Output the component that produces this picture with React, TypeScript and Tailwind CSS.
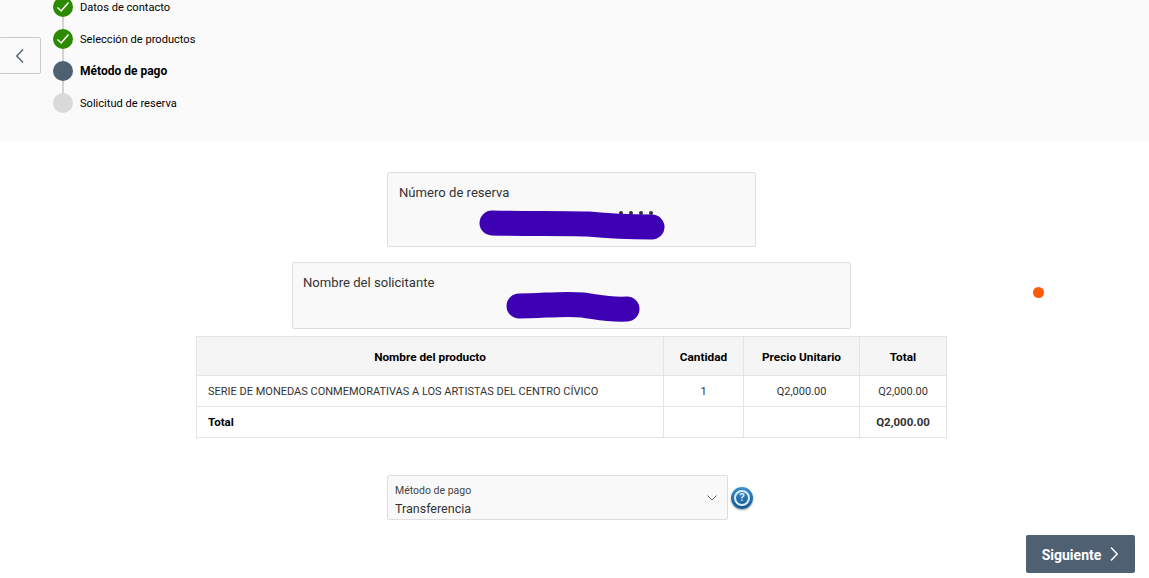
const steps = [
  { label: 'Datos de contacto', state: 'done' },
  { label: 'Selección de productos', state: 'done' },
  { label: 'Método de pago', state: 'current' },
  { label: 'Solicitud de reserva', state: 'pending' },
];

function StepDot({ state }: { state: string }) {
  if (state === 'done') {
    return (
      <span className="flex h-5 w-5 items-center justify-center rounded-full bg-[#2b8a00]">
        <svg width="14" height="12" viewBox="0 0 14 12" fill="none" stroke="white" strokeWidth="1.5">
          <path d="M1.5 6.5 L5.2 10 L12.5 1.5" />
        </svg>
      </span>
    );
  }
  return <span className={`h-5 w-5 rounded-full ${state === 'current' ? 'bg-[#4f6072]' : 'bg-[#d9d9d9]'}`} />;
}

function Stepper() {
  return (
    <ul className="relative ml-3 -mt-[3px] flex flex-col gap-3">
      <span className="absolute left-[9px] top-4 h-[88px] w-[2px] bg-[#d4d4d4]" />
      {steps.map((s) => (
        <li key={s.label} className="relative flex h-5 items-center gap-[7px]">
          <StepDot state={s.state} />
          <span className={`text-black ${s.state === 'current' ? 'text-[12px] font-bold' : 'pt-[2px] text-[11.1px]'}`}>{s.label}</span>
        </li>
      ))}
    </ul>
  );
}

function InfoBox({ label, width, height, left, children }: { label: string; width: string; height: string; left: string; children: React.ReactNode }) {
  return (
    <div className={`relative rounded-[2px] border border-[#dedede] bg-[#f9f9f9] pt-[11px] text-[13.1px] leading-[18px] text-[#333] ${width} ${height} ${left}`}>
      {label}
      {children}
    </div>
  );
}

const head = 'border border-[#e4e4e4] px-3 pt-1 text-[11.8px] font-bold';
const cell = 'border border-[#e4e4e4] px-[11px] pt-[2px] text-[11px]';
const bold = 'border border-[#e4e4e4] px-[11px] pt-[2px] text-[11.5px] font-bold';

export default function App() {
  return (
    <div className="relative h-[578px] w-[1149px] overflow-hidden bg-white font-['Roboto','Noto_Sans',sans-serif]">
      <div className="flex h-[142px] items-start bg-[#fafafa]">
        <button className="mt-[37px] -ml-px flex h-[37px] w-[42px] items-center justify-center rounded-[2px] border border-[#c5ccd3]">
          <svg width="10" height="16" viewBox="0 0 10 16" fill="none" stroke="#56697c" strokeWidth="1.5">
            <path d="M8 1.5 L1.8 8 L8 14.5" />
          </svg>
        </button>
        <div>
          <Stepper />
        </div>
      </div>

      <div className="ml-[196px] w-[751px] pt-[30px]">
        <InfoBox label="" width="w-[369px]" height="h-[75px]" left="ml-[191px]">
          <span className="ml-[11px]">Número de reserva</span>
          <svg className="absolute left-[80px] top-[30px]" width="200" height="40" viewBox="0 0 200 40" fill="none">
            <circle cx="153" cy="10" r="2" fill="#333" />
            <circle cx="163" cy="10" r="2" fill="#333" />
            <circle cx="173" cy="10" r="2" fill="#333" />
            <circle cx="183" cy="10" r="2" fill="#333" />
            <path d="M24 20 C60 21 90 20 120 21 C140 23 160 24 184 24" stroke="#3d00b3" strokeWidth="25" strokeLinecap="round" />
          </svg>
        </InfoBox>
        <div className="mt-[15px]">
          <InfoBox label="" width="w-[559px]" height="h-[67px]" left="ml-[96px]">
            <span className="ml-[10px]">Nombre del solicitante</span>
            <svg className="absolute left-[200px] top-[25px]" width="160" height="40" viewBox="0 0 160 40" fill="none">
              <path d="M26 18 C50 18 70 15 90 17 C105 19 115 22 134 21" stroke="#3d00b3" strokeWidth="25" strokeLinecap="round" />
            </svg>
          </InfoBox>
        </div>

        <table className="mt-[7px] w-[750px] table-fixed border-collapse text-[#333]">
          <colgroup>
            <col className="w-[467px]" />
            <col className="w-[80px]" />
            <col className="w-[116px]" />
            <col className="w-[87px]" />
          </colgroup>
          <thead>
            <tr className="h-[39px] bg-[#f5f5f5] text-black">
              <th className={head}>Nombre del producto</th>
              <th className={head}>Cantidad</th>
              <th className={head}>Precio Unitario</th>
              <th className={head}>Total</th>
            </tr>
          </thead>
          <tbody>
            <tr className="h-[31px]">
              <td className={`${cell} whitespace-nowrap`}>SERIE DE MONEDAS CONMEMORATIVAS A LOS ARTISTAS DEL CENTRO CÍVICO</td>
              <td className={`${cell} text-center`}>1</td>
              <td className={`${cell} text-center`}>Q2,000.00</td>
              <td className={`${cell} text-center`}>Q2,000.00</td>
            </tr>
            <tr className="h-[31px]">
              <td className={`${bold} text-black`}>Total</td>
              <td className={bold}></td>
              <td className={bold}></td>
              <td className={`${bold} text-center`}>Q2,000.00</td>
            </tr>
          </tbody>
        </table>

        <div className="ml-[191px] mt-[37px] flex items-center gap-[3px]">
          <div className="relative h-[45px] w-[341px] rounded-[2px] border border-[#dedede] bg-[#f9f9f9] px-[7px] pt-[8px]">
            <div className="text-[10.5px] leading-[14px] text-[#444]">Método de pago</div>
            <div className="pt-[1px] text-[12.5px] leading-[19px] text-[#333]">Transferencia</div>
            <svg className="absolute right-[9px] top-[18px]" width="12" height="8" viewBox="0 0 12 8" fill="none" stroke="#666" strokeWidth="1">
              <path d="M1.5 1.5 L6 6 L10.5 1.5" />
            </svg>
          </div>
          <span className="flex h-[22px] w-[22px] items-center justify-center rounded-full bg-gradient-to-b from-[#3a8fd0] to-[#14588f] shadow-[0_1px_2px_rgba(0,0,0,0.4)]">
            <span className="flex h-[16px] w-[16px] items-center justify-center rounded-full border-2 border-[#d8ecfa] text-[11px] font-bold leading-none text-[#d8ecfa]">?</span>
          </span>
        </div>
      </div>

      <button className="absolute left-[1026px] top-[535px] flex h-[38px] w-[109px] items-center justify-center gap-2 rounded-[2px] bg-[#4f6072] text-[14px] font-bold text-white">
        <span className="pt-[2px]">Siguiente</span>
        <svg width="10" height="16" viewBox="0 0 10 16" fill="none" stroke="white" strokeWidth="1.5">
          <path d="M2 1.5 L8.2 8 L2 14.5" />
        </svg>
      </button>

      <span className="absolute left-[1033px] top-[287px] h-[11px] w-[11px] rounded-full bg-[#ff5a0a]" />
    </div>
  );
}
